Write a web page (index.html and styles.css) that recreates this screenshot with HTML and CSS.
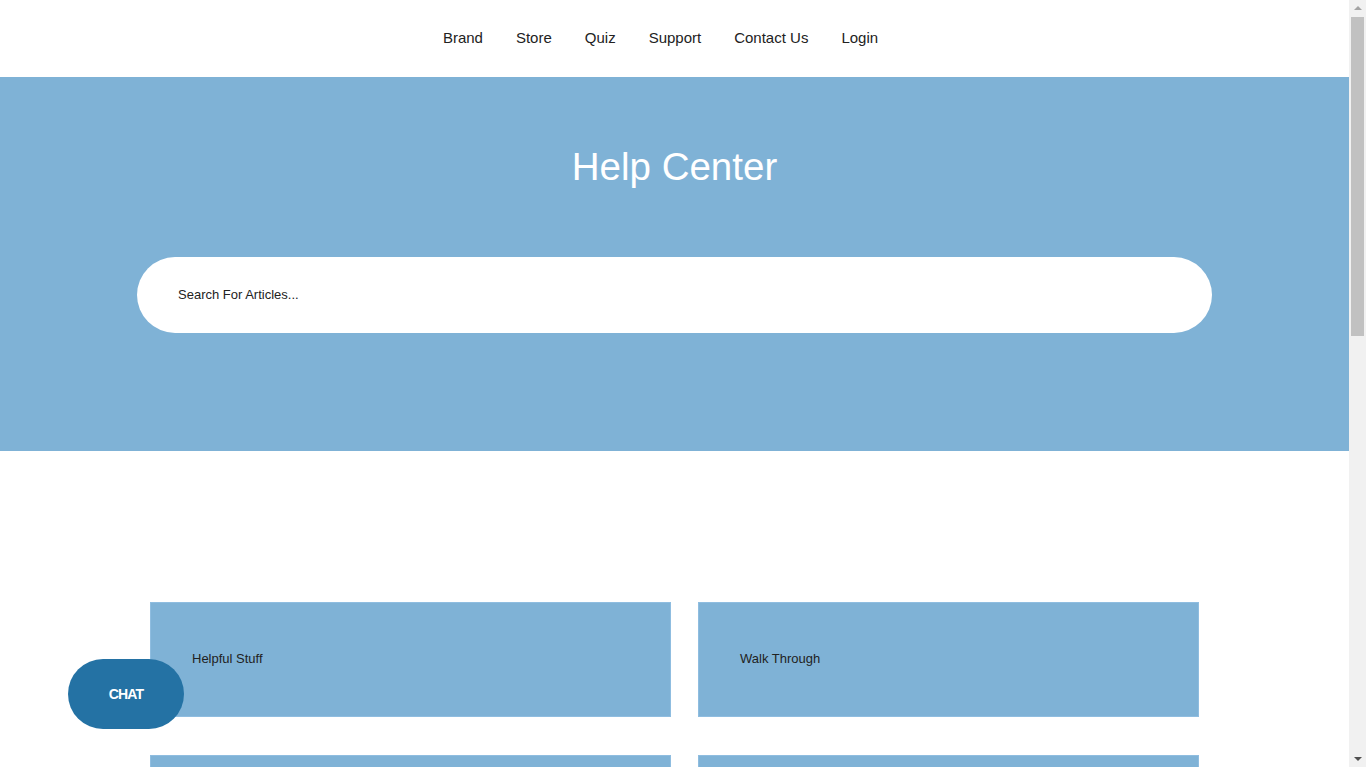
FILE: index.html
```html
<!DOCTYPE html>
<html lang="en">
<head>
<meta charset="utf-8">
<title>Help Center</title>
<link rel="stylesheet" href="styles.css">
</head>
<body>
<div class="page">
  <header class="topbar">
    <nav class="nav">
      <a href="#" class="nav-link">Brand</a>
      <a href="#" class="nav-link">Store</a>
      <a href="#" class="nav-link">Quiz</a>
      <a href="#" class="nav-link">Support</a>
      <a href="#" class="nav-link">Contact Us</a>
      <a href="#" class="nav-link">Login</a>
    </nav>
  </header>
  <section class="hero">
    <h1 class="hero-title">Help Center</h1>
    <div class="search">
      <input class="search-input" type="text" placeholder="Search For Articles...">
    </div>
  </section>
  <main class="categories">
    <div class="grid">
      <a href="#" class="card">Helpful Stuff</a>
      <a href="#" class="card">Walk Through</a>
      <a href="#" class="card">Getting Started</a>
      <a href="#" class="card">Orders &amp; Shipping</a>
      <a href="#" class="card">Returns</a>
      <a href="#" class="card">Account</a>
      <a href="#" class="card">Billing</a>
      <a href="#" class="card">FAQ</a>
    </div>
  </main>
</div>
<div class="scrollbar" aria-hidden="true">
  <span class="sb-arrow sb-up"></span>
  <span class="sb-thumb"></span>
  <span class="sb-arrow sb-down"></span>
</div>
<button class="chat">CHAT</button>
</body>
</html>
```
FILE: styles.css
```css
* { box-sizing: border-box; }
html, body { margin: 0; padding: 0; }
body {
  font-family: "Liberation Sans", Arial, sans-serif;
  color: #222;
  background: #fff;
}
.page {
  width: 1349px;
}
.topbar {
  height: 77px;
  display: flex;
  justify-content: center;
  align-items: center;
  padding-bottom: 2px;
}
.nav {
  display: flex;
  gap: 33px;
  padding-right: 28px;
}
.nav-link {
  font-size: 15px;
  color: #222;
  text-decoration: none;
}
.hero {
  background: #7fb2d6;
  padding: 66px 0 118px;
  display: flex;
  flex-direction: column;
  align-items: center;
}
.hero-title {
  margin: 0 0 66px;
  font-size: 38.5px;
  font-weight: normal;
  line-height: 48px;
  color: #fff;
}
.search {
  width: 1075px;
  height: 76px;
  background: #fff;
  border-radius: 38px;
  display: flex;
  align-items: center;
  padding: 0 41px;
}
.search-input {
  border: 0;
  outline: 0;
  width: 100%;
  font-family: "Liberation Sans", Arial, sans-serif;
  font-size: 13px;
  color: #222;
  background: transparent;
  padding: 0;
  margin-top: -2px;
}
.search-input::placeholder { color: #222; opacity: 1; }
.categories {
  padding: 151px 0 500px;
  display: flex;
  justify-content: center;
}
.grid {
  display: grid;
  grid-template-columns: 521px 501px;
  column-gap: 27px;
  row-gap: 38px;
}
.card {
  height: 115px;
  background: #7fb2d6;
  border: 1px solid #8fbde0;
  display: flex;
  align-items: center;
  padding-left: 41px;
  padding-bottom: 2px;
  font-size: 13px;
  color: #222;
  text-decoration: none;
}
.scrollbar {
  position: fixed;
  top: 0;
  right: 0;
  width: 17px;
  height: 100vh;
  background: #f1f1f1;
  display: flex;
  flex-direction: column;
  align-items: center;
}
.sb-arrow {
  width: 0;
  height: 0;
  border-left: 4px solid transparent;
  border-right: 4px solid transparent;
  margin: 6px 0;
}
.sb-up { border-bottom: 4px solid #a3a3a3; }
.sb-down { border-top: 4px solid #505050; margin-top: auto; }
.sb-thumb {
  width: 13px;
  height: 319px;
  margin-top: 1px;
  background: #c1c1c1;
}
.chat {
  position: fixed;
  left: 68px;
  bottom: 38px;
  width: 116px;
  height: 70px;
  border: 0;
  border-radius: 35px;
  background: #2472a4;
  color: #fff;
  font-family: "Liberation Sans", Arial, sans-serif;
  font-size: 14px;
  letter-spacing: -0.8px;
  font-weight: bold;
  cursor: pointer;
}
```
